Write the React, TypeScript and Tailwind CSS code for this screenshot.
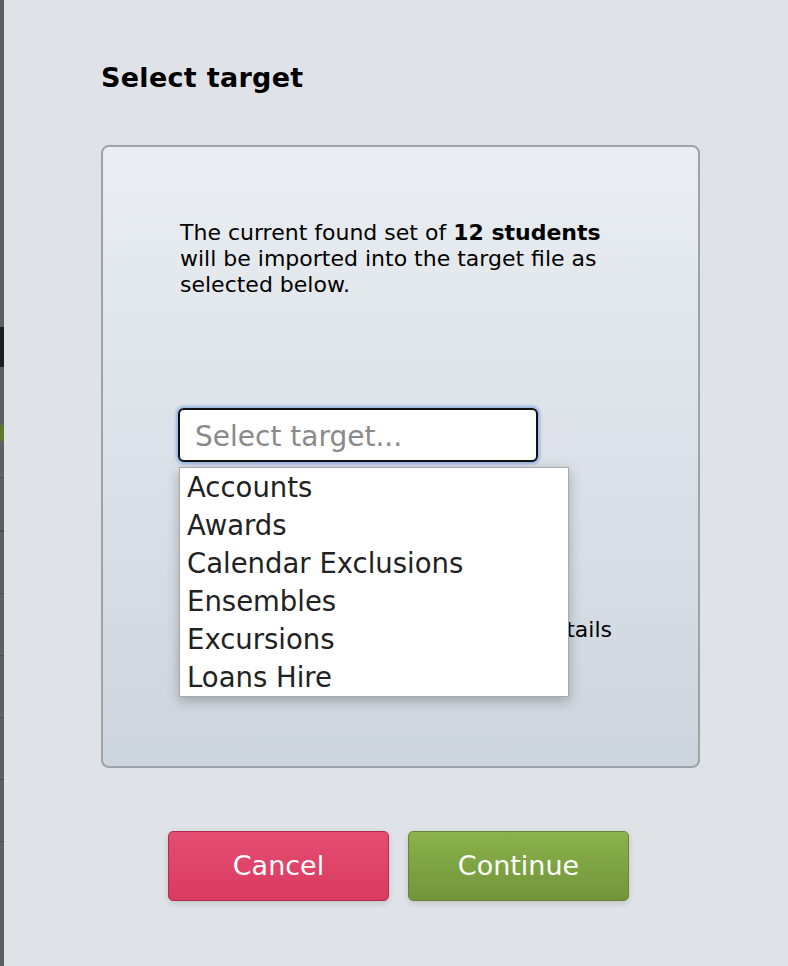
import React from 'react';

const targets = ['Accounts', 'Awards', 'Calendar Exclusions', 'Ensembles', 'Excursions', 'Loans Hire'];

export default function App() {
  return (
    <div className="flex h-[966px] w-full overflow-hidden font-['DejaVu_Sans',Verdana,sans-serif] text-black">
      {/* edge of the window behind the sheet */}
      <div className="flex w-[4px] shrink-0 flex-col bg-[#5f5f61]">
        <div className="h-[327px]" />
        <div className="h-[40px] bg-[#1e1e1e]" />
        <div className="h-[58px]" />
        <div className="h-[16px] bg-[#5d7a2c]" />
        <div className="h-[36px]" />
        <div className="h-px bg-[#4a4a4c]" />
        <div className="h-[52px]" />
        <div className="h-[2px] bg-[#4a4a4c]" />
        <div className="h-[61px]" />
        <div className="h-px bg-[#4a4a4c]" />
        <div className="h-[61px]" />
        <div className="h-px bg-[#4a4a4c]" />
        <div className="h-[61px]" />
        <div className="h-px bg-[#4a4a4c]" />
        <div className="h-[61px]" />
        <div className="h-px bg-[#4a4a4c]" />
        <div className="h-[61px]" />
        <div className="h-px bg-[#4a4a4c]" />
      </div>

      <div className="flex-1 bg-[#dfe3e7] pl-[97px] pt-[58px]">
        <h1 className="text-[27px] font-bold leading-[40px] tracking-[0.3px]">Select target</h1>

        <div className="mt-[47px] h-[623px] w-[599px] rounded-[8px] border-2 border-[#9ea3a8] bg-gradient-to-b from-[#eaeef2] to-[#cdd5de] pl-[77px] pt-[73px]">
          <p className="text-[22px] leading-[26px]">
            The current found set of <b>12 students</b>
            <br />
            will be imported into the target file as
            <br />
            selected below.
          </p>

          <div className="relative -ml-[2px] mt-[110px] w-[360px]">
            <div className="flex h-[54px] items-center rounded-[6px] border-2 border-[#111] bg-white pl-[15px] pt-[4px] shadow-[0_0_3px_2px_rgba(90,140,220,0.55)]">
              <span className="text-[28px] text-[#8a8a8a]">Select target...</span>
            </div>

            <ul className="absolute left-px top-[59px] z-10 w-[390px] border border-[#a9a9a9] bg-white pl-[7px] text-[27.5px] leading-[38px] text-[#222] shadow-[0_4px_12px_rgba(0,0,0,0.25)]">
              {targets.map((t) => (
                <li key={t}>{t}</li>
              ))}
            </ul>

            <div className="ml-[2px] mt-[155px] w-[432px] text-right text-[22px] leading-[26px]">
              Import student details
            </div>
          </div>
        </div>

        <div className="ml-[67px] mt-[63px] flex gap-[19px]">
          <button className="h-[70px] w-[221px] rounded-[5px] border border-[#b32d4e] bg-gradient-to-b from-[#e54d72] to-[#d93a60] text-[27px] text-white shadow-[0_2px_6px_rgba(0,0,0,0.15)]">
            Cancel
          </button>
          <button className="h-[70px] w-[221px] rounded-[5px] border border-[#66843a] bg-gradient-to-b from-[#8bb24c] to-[#72953a] text-[27px] text-white shadow-[0_2px_6px_rgba(0,0,0,0.15)]">
            Continue
          </button>
        </div>
      </div>
    </div>
  );
}
